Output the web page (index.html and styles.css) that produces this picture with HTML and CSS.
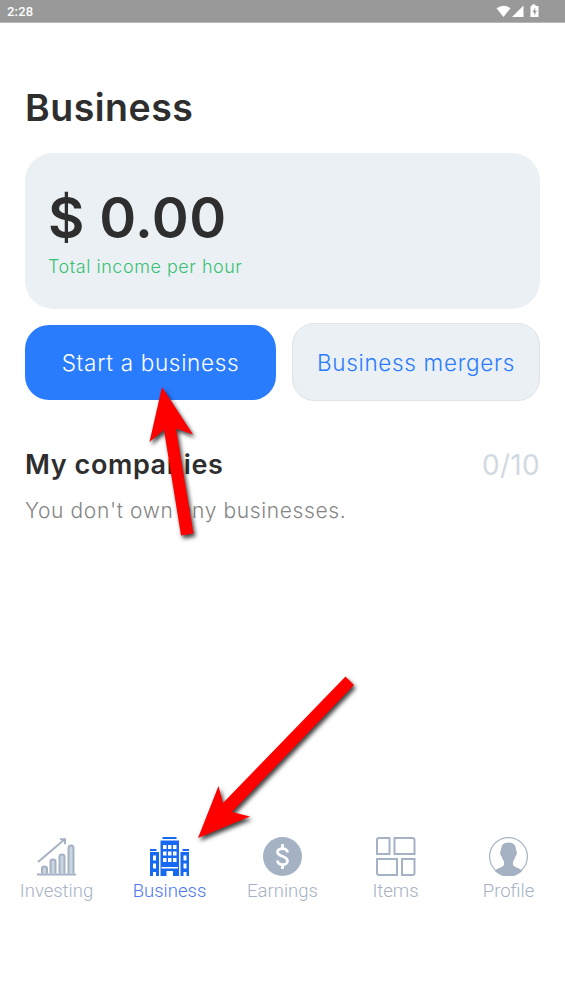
FILE: index.html
```html
<!DOCTYPE html>
<html lang="en">
<head>
<meta charset="utf-8">
<title>Business</title>
<link rel="stylesheet" href="styles.css">
</head>
<body>
<div class="screen">
  <header class="status">
    <span class="clock">2:28</span>
    <svg class="status-icons" width="46" height="16" viewBox="0 0 46 16" fill="#fff">
      <path d="M0.5 4.2Q7.5-.9 14.5 4.2L7.5 13Z"/>
      <path d="M16 13L27.500 1.500V13Z"/>
      <path d="M36 .5h3.500v1.500h3v11h-8V2h1.500Z"/>
      <path d="M39.200 3.500L36.500 8.200h1.700v3.300l2.700-4.700h-1.700Z" fill="#999"/>
    </svg>
  </header>
  <main class="content">
    <h1 class="title">Business</h1>
    <section class="income">
      <div class="amount">$ 0.00</div>
      <div class="caption">Total income per hour</div>
    </section>
    <div class="actions">
      <button class="button primary">Start a business</button>
      <button class="button secondary">Business mergers</button>
    </div>
    <div class="companies">
      <h2 class="subtitle">My companies</h2>
      <span class="count">0/10</span>
    </div>
    <p class="empty">You don't own any businesses.</p>
  </main>
  <nav class="nav">
    <a class="tab">
      <svg class="icon" viewBox="0.5 -0.5 40 40" fill="#cbd5e0" stroke="#a5b2c4" stroke-width="2">
        <path d="M5.500 37v-5q0-2 2.500-2t2.500 2v5M14 37V25q0-2 2.500-2t2.500 2v12M23 37V20q0-2 2.500-2t2.500 2v17M32 37V11.500q0-2.500 2.500-2.500t2.500 2.500V37"/>
        <path d="M.5 38h39M1.500 25.500L28 3M23.500 2.800h5v5" fill="none"/>
      </svg>
      <span class="label">Investing</span>
    </a>
    <a class="tab active">
      <svg class="icon" viewBox="1 -0.5 40 40" fill="#1769f2">
        <path d="M13.500 .5h14v2h-14ZM11.500 4h18.500v35.500h-6v-5h-6.500v5h-6ZM1 12.500h6.500v2H1ZM1 15.500h9V39.500H7v-4H4v4H1ZM33.500 12.500H40v2h-6.500ZM31.500 15.500H40V39.500h-2.500v-4h-3v4h-3Z"/>
        <path fill="#fff" d="M14 8.500h3.500v4H14ZM19 8.500h3.500v4H19ZM24 8.500h3.500v4H24ZM14 15h3.500v4H14ZM19 15h3.500v4H19ZM24 15h3.500v4H24ZM14 21.500h3.500v4H14ZM19 21.500h3.500v4H19ZM24 21.500h3.500v4H24ZM12.500 30.500h16.500v1.500H12.500ZM4 19h3v5H4ZM4 27h3v5H4ZM34.500 19h3v5h-3ZM34.500 27h3v5h-3Z"/>
      </svg>
      <span class="label">Business</span>
    </a>
    <a class="tab">
      <svg class="icon" viewBox="0.5 -0.5 40 40">
        <circle cx="20" cy="20" r="19.500" fill="#a5b2c4"/>
        <path d="M20 7.500v5M20 27.500v5M25 16c0-5-10-5-10-.5 0 5 10 3.500 10 9 0 5-10 5-10-.5" fill="none" stroke="#fff" stroke-width="2.800"/>
      </svg>
      <span class="label">Earnings</span>
    </a>
    <a class="tab">
      <svg class="icon" viewBox="0.5 -0.5 40 40" fill="none" stroke="#a5b2c4" stroke-width="2">
        <path d="M3.500 1.500h10.500v16h-12.500v-14q0-2 2-2ZM19 1.500h18q2 0 2 2v14h-20ZM1.500 22.500h20v16h-18q-2 0-2-2ZM26.500 22.500h12.500v14q0 2-2 2h-10.500Z"/>
      </svg>
      <span class="label">Items</span>
    </a>
    <a class="tab">
      <svg class="icon" viewBox="0.5 -0.5 40 40">
        <circle cx="20" cy="20" r="18.900" fill="#fff" stroke="#a5b2c4" stroke-width="1.200"/>
        <path d="M12.500 14Q12 6 20 6t7.500 8q1.200 0 .7 3.500-.4 2-1.400 2.500-.5 3-2.300 5v3.500q1.500 2 6 3.500 2.500 1 3.200 2.500A19 19 0 0 1 6.300 34.500q.7-1.500 3.200-2.500 4.500-1.500 6-3.500V25q-1.800-2-2.300-5-1-.5-1.400-2.500-.5-3.500.7-3.500Z" fill="#a5b2c4"/>
      </svg>
      <span class="label">Profile</span>
    </a>
  </nav>
  <svg class="arrows" width="565" height="1004" viewBox="0 0 565 1004" fill="#f00">
    <path d="M162 387L193 434.500L176 428.500L193.500 533.500L181 535.500L164 430L149.500 442Z"/>
    <path d="M198 838L218.500 786L223 803L345.500 676.500L354 685L232 812L250 816.500Z"/>
  </svg>
</div>
</body>
</html>
```
FILE: styles.css
```css
* { box-sizing: border-box; }
body { margin: 0; background: #fff; font-family: Inter, sans-serif; }
.screen { position: relative; width: 565px; height: 1004px; overflow: hidden; display: flex; flex-direction: column; }
.status { height: 23px; background: #999; border-bottom: 1px solid #b8b8b8; display: flex; justify-content: space-between; padding: 4px 23px 0 7px; color: #fff; }
.clock { font: 500 13px/16px Roboto, sans-serif; letter-spacing: .2px; }
.content { padding: 61px 25px 0; height: 813px; }
.title { margin: 0; font-size: 37.500px; line-height: 48px; font-weight: 600; letter-spacing: .5px; color: #2e2e2e; }
.income { margin-top: 20.500px; height: 156px; border-radius: 28px; background: #ebf0f5; padding: 31px 23px; }
.amount { font-size: 56px; line-height: 68px; font-weight: 600; letter-spacing: .4px; color: #2e2e2e; }
.caption { margin-top: 3px; font-size: 18px; line-height: 24px; font-weight: 350; letter-spacing: .53px; color: #38c172; }
.actions { margin-top: 14.500px; display: flex; gap: 16px; align-items: center; }
.button { border: 0; padding: 2px 0 0; font-family: inherit; font-size: 22.500px; line-height: 30px; font-weight: 350; letter-spacing: .68px; }
.primary { width: 251px; height: 75px; border-radius: 24px; background: #2a7cff; color: #fff; }
.secondary { width: 248px; height: 78px; border-radius: 22px; border: 1px solid #e1e4e6; background: #ebf0f5; color: #2a7cff; }
.companies { margin-top: 45.500px; height: 36px; display: flex; justify-content: space-between; align-items: center; }
.subtitle { margin: 0; font-size: 27px; line-height: 36px; font-weight: 600; letter-spacing: .6px; color: #2e2e2e; }
.count { font-size: 28px; line-height: 36px; color: #d1d9e2; font-weight: 400; letter-spacing: .3px; }
.empty { margin: 13px 0 0; font-size: 21px; line-height: 30px; font-weight: 350; letter-spacing: .62px; color: #858585; }
.nav { display: flex; }
.tab { width: 113px; display: flex; flex-direction: column; align-items: center; color: #a5b2c4; }
.active { color: #4c78f0; }
.icon { width: 40px; height: 40px; }
.label { margin-top: 3px; font-family: Roboto, sans-serif; font-size: 18.500px; line-height: 24px; font-weight: 300; letter-spacing: 0; }
.arrows { position: absolute; left: 0; top: 0; filter: drop-shadow(2px 3px 2px rgba(0,0,0,.75)); pointer-events: none; }
```
